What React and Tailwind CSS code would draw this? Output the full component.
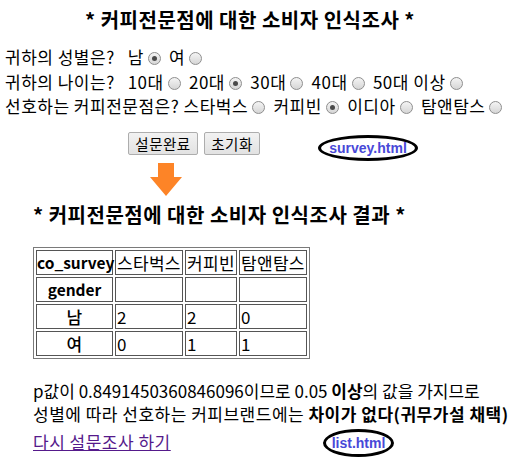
import React from "react";

function Radio({ checked }) {
  return (
    <span className="inline-block align-[-1px] w-[13px] h-[13px] rounded-full border border-[#8e8e8e] bg-gradient-to-b from-[#f4f4f4] to-[#d6d6d6] ml-[4px] mr-[4px] relative">
      {checked && (
        <span className="absolute left-[3px] top-[3px] w-[5px] h-[5px] rounded-full bg-[#4a4a4a]" />
      )}
    </span>
  );
}

function Btn({ children, w }) {
  return (
    <button
      className={`h-[23px] ${w} border border-[#adadad] rounded-[2px] bg-gradient-to-b from-[#f2f2f2] to-[#e2e2e2] text-[14.5px] leading-[21px] tracking-[0.5px] text-black`}
    >
      {children}
    </button>
  );
}

const cell = "border border-[#555] p-0 px-[1px] text-left";
const hcell = "border border-[#555] p-0 text-center";

export default function App() {
  const font = { fontFamily: '"Noto Sans CJK KR", "Noto Sans", sans-serif' };
  const latin = { fontFamily: '"Liberation Sans", Arial, sans-serif' };
  return (
    <div className="relative w-[521px] h-[471px] bg-white text-black text-[17px]" style={font}>
      <div className="h-[40px] leading-[40px] text-center font-bold text-[20px] tracking-[0.5px] w-[500px]">
        * 커피전문점에 대한 소비자 인식조사 *
      </div>
      <div className="mt-[5px] pl-[5px] whitespace-nowrap tracking-[0.5px]">
        <div className="h-[24px] leading-[24px]">
          귀하의 성별은? &nbsp; 남<Radio checked /> 여<Radio />
        </div>
        <div className="h-[25px] leading-[25px]">
          귀하의 나이는? &nbsp; 10대<Radio /> 20대<Radio checked /> 30대<Radio /> 40대<Radio /> 50대 이상<Radio />
        </div>
        <div className="h-[24px] leading-[24px]">
          선호하는 커피전문점은? 스타벅스<Radio /> 커피빈<Radio checked /> 이디아<Radio /> 탐앤탐스<Radio />
        </div>
      </div>
      <div className="mt-[14px] flex gap-[6px] pl-[128px]">
        <Btn w="w-[70px]">설문완료</Btn>
        <Btn w="w-[56px]">초기화</Btn>
      </div>
      <div className="mt-[8px] pl-[148px] h-[34px]">
        <svg width="36" height="34" viewBox="0 0 36 34">
          <path d="M10 0 H26 V14 H34 L18 33 L2 14 H10 Z" fill="#fd8427" />
        </svg>
      </div>
      <div className="h-[36px] leading-[36px] pl-[33px] font-bold text-[20px] tracking-[0.5px] whitespace-nowrap">
        * 커피전문점에 대한 소비자 인식조사 결과 *
      </div>
      <div className="mt-[14px] pl-[33px]">
        <table className="table-fixed w-[276px] border-separate border-spacing-[2px] border border-[#7a7a7a] text-[17px] leading-[21px] tracking-[0.3px] whitespace-nowrap">
          <colgroup>
            <col className="w-[77px]" />
            <col className="w-[68px]" />
            <col className="w-[52px]" />
            <col className="w-[68px]" />
          </colgroup>
          <tbody>
            <tr className="h-[25px]">
              <th className={`${hcell} font-bold text-[15.5px] tracking-normal`}>co_survey</th>
              <td className={cell}>스타벅스</td>
              <td className={cell}>커피빈</td>
              <td className={cell}>탐앤탐스</td>
            </tr>
            <tr className="h-[25px]">
              <th className={`${hcell} font-bold text-[15.5px] tracking-normal`}>gender</th>
              <td className={cell}></td>
              <td className={cell}></td>
              <td className={cell}></td>
            </tr>
            <tr className="h-[25px]">
              <th className={`${hcell} font-medium`}>남</th>
              <td className={cell}>2</td>
              <td className={cell}>2</td>
              <td className={cell}>0</td>
            </tr>
            <tr className="h-[25px]">
              <th className={`${hcell} font-medium`}>여</th>
              <td className={cell}>0</td>
              <td className={cell}>1</td>
              <td className={cell}>1</td>
            </tr>
          </tbody>
        </table>
      </div>
      <div className="mt-[20px] pl-[33px] leading-[23px] whitespace-nowrap">
        <div>
          p값이 0.8491450360846096이므로 0.05 <b>이상</b>의 값을 가지므로
        </div>
        <div className="tracking-[0.5px]">
          성별에 따라 선호하는 커피브랜드에는 <b>차이가 없다(귀무가설 채택)</b>
        </div>
      </div>
      <div className="mt-[5px] pl-[33px] leading-[23px] tracking-[0.5px]">
        <a href="#" className="underline text-[#551a8b]">다시 설문조사 하기</a>
      </div>

      <div className="absolute left-[318px] top-[135px] w-[100px] h-[26px] rounded-[50%] border-[3px] border-black flex items-center justify-center">
        <span className="text-[14px] font-bold text-[#4848d8] leading-none" style={latin}>survey.html</span>
      </div>
      <div className="absolute left-[323px] top-[429px] w-[71px] h-[28px] rounded-[50%] border-[3px] border-black flex items-center justify-center">
        <span className="text-[14px] font-bold text-[#4848d8] leading-none" style={latin}>list.html</span>
      </div>
    </div>
  );
}
